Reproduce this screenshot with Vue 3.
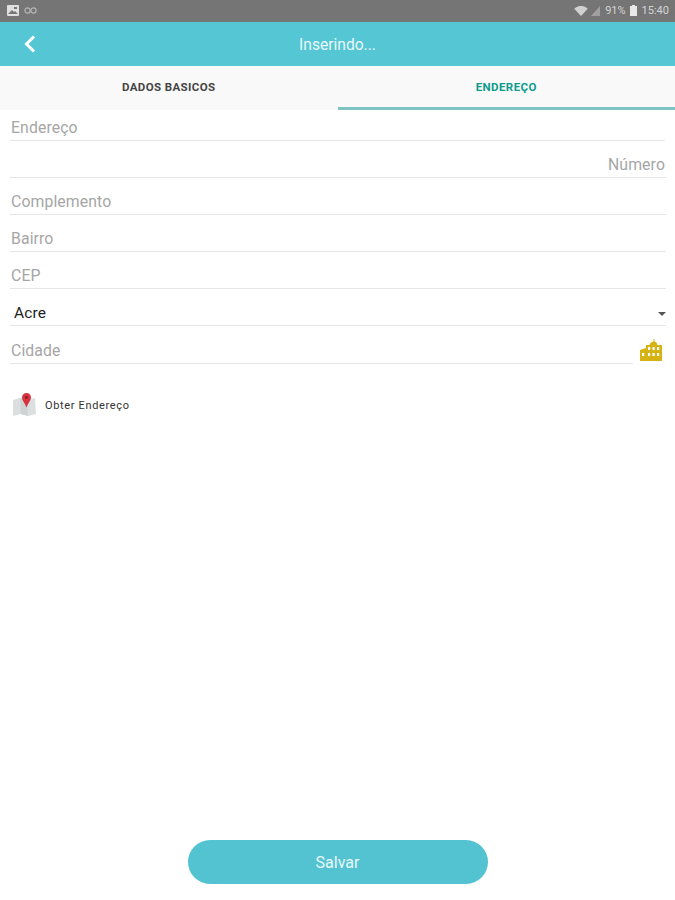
<script setup>
const fields = [
  { label: 'Endereço', cls: 'first' },
  { label: 'Número', cls: 'right' },
  { label: 'Complemento', cls: '' },
  { label: 'Bairro', cls: '' },
  { label: 'CEP', cls: '' },
]
</script>

<template>
  <div class="page">
    <div class="status">
      <div class="status-left">
        <svg width="12" height="11" viewBox="0 0 12 11"><rect width="12" height="11" rx="1" fill="#e0e0e0" /><path d="M1 9l4-4 2 2 1-1 3 3z" fill="#777" /><rect x="7" y="2" width="3" height="2" fill="#777" /></svg>
        <svg width="13" height="7" viewBox="0 0 13 7" fill="none" stroke="#b4b4b4" stroke-width="1.2"><circle cx="3.500" cy="3.500" r="2.600" /><circle cx="9.500" cy="3.500" r="2.600" /></svg>
      </div>
      <div class="status-right">
        <svg width="14" height="10" viewBox="0 0 15 11"><path d="M0 3a10.500 10.500 0 0 1 15 0L7.500 11z" fill="#d0d0d0" /></svg>
        <svg width="9" height="10" viewBox="0 0 9 10"><path d="M9 0v10H0z" fill="#a0a0a0" /></svg>
        <span class="pct">91%</span>
        <svg class="batt" width="7" height="11" viewBox="0 0 7 11"><path d="M2 0h3v1h2v10H0V1h2z" fill="#e8e8e8" /></svg>
        <span>15:40</span>
      </div>
    </div>

    <header class="bar">
      <svg class="back" width="12" height="18" viewBox="0 0 12 18" fill="none" stroke="#fff" stroke-width="3"><path d="M10 1.500L2.500 9l7.500 7.500" /></svg>
      <span>Inserindo...</span>
    </header>

    <nav class="tabs">
      <div class="tab">DADOS BASICOS</div>
      <div class="tab active">ENDEREÇO</div>
    </nav>

    <form class="form" @submit.prevent>
      <div v-for="f in fields" :key="f.label" class="field" :class="f.cls">{{ f.label }}</div>
      <div class="field select">
        <span>Acre</span>
        <i class="caret"></i>
      </div>
      <div class="city">
        <div class="field">Cidade</div>
        <svg width="22" height="22" viewBox="0 0 22 22" fill="#d5b313">
          <path d="M13.500 0h1v2.500c1.700.4 2.800 1.700 3 3.500H22v16H0V11l6-2V6h3.500c.2-1.800 1.800-3.100 4-3.500z" />
          <g fill="#fff">
            <rect x="8" y="8" width="2.200" height="3" /><rect x="12.500" y="8" width="2.200" height="3" /><rect x="17" y="8" width="2.200" height="3" />
            <rect x="2" y="14" width="2.200" height="3" /><rect x="8" y="14" width="2.200" height="3" /><rect x="12.500" y="14" width="2.200" height="3" /><rect x="17" y="14" width="2.200" height="3" />
          </g>
        </svg>
      </div>
      <div class="locate">
        <svg width="25" height="24" viewBox="0 0 25 24">
          <path d="M1 7l7-2 7 2 8-2 1 16-8 2-7-2-8 2z" fill="#dcdfe0" />
          <path d="M8 5l7 2 1 16-7-2z" fill="#cfd3d4" />
          <path d="M14.500 0a4.500 4.500 0 0 1 4.500 4.500c0 3-3 5.500-4.500 10-1.500-4.500-4.500-7-4.500-10a4.500 4.500 0 0 1 4.500-4.500z" fill="#d8343f" />
          <circle cx="14.500" cy="4.500" r="1.400" fill="#8a1c24" />
        </svg>
        <span>Obter Endereço</span>
      </div>
    </form>

    <div class="footer">
      <button class="save" type="button">Salvar</button>
    </div>
  </div>
</template>

<style>
html, body { margin: 0; background: #fff; }
</style>

<style scoped>
.page { width: 675px; height: 900px; display: flex; flex-direction: column; font-family: Roboto, "Liberation Sans", sans-serif; background: #fff; overflow: hidden; }

.status { height: 22px; box-sizing: border-box; padding: 0 6px 1px 7px; background: #757575; display: flex; align-items: center; justify-content: space-between; color: #d4d4d4; font-size: 11px; }
.status-left, .status-right { display: flex; align-items: center; gap: 5px; }
.status-right { gap: 3px; }
.pct { margin: 0 1px 0 2px; }
.batt { margin-right: 2px; }

.bar { height: 44px; padding-top: 1px; background: #55c6d4; color: #e9f8fa; font-size: 15.600px; display: flex; align-items: center; justify-content: center; position: relative; box-sizing: border-box; }
.back { position: absolute; left: 24px; top: 13px; }

.tabs { height: 44px; display: flex; background: #f9f9f9; }
.tab { flex: 1; display: flex; align-items: center; justify-content: center; box-sizing: border-box; padding-top: 1px; border-bottom: 3px solid transparent; font-size: 11.500px; font-weight: 700; color: #444; letter-spacing: 0.4px; }
.tab.active { color: #0c9c8c; border-bottom-color: #7dc4c2; }

.form { padding: 0 9px 0 10px; display: flex; flex-direction: column; }
.field { height: 37px; box-sizing: border-box; padding: 0 1px 3px; border-bottom: 1px solid #e6e6e6; display: flex; align-items: flex-end; color: #a6a6a6; font-size: 15.800px; letter-spacing: 0.1px; }
.field.first { height: 31px; margin-right: 1px; }
.field.right { justify-content: flex-end; }
.field.select { color: #222; padding: 0 0 3px 4px; justify-content: space-between; align-items: flex-end; font-size: 15.500px; }
.caret { width: 0; height: 0; margin: 0 0 6px; border: 4px solid transparent; border-top-color: #555; border-bottom: 0; }

.city { display: flex; align-items: flex-end; height: 38px; }
.city .field { flex: 1; height: 38px; margin-right: 7px; }
.city svg { margin: 0 4px 3px 0; }

.locate { display: flex; align-items: center; gap: 8px; margin: 29px 0 0 2px; color: #333; font-size: 11px; letter-spacing: 0.650px; }

.footer { flex: 1; display: flex; align-items: flex-end; justify-content: center; padding-bottom: 16px; }
.save { width: 300px; height: 44px; border: none; border-radius: 22px; background: #54c3d1; color: #e9f8fa; font-family: inherit; font-size: 16px; font-weight: 400; }
</style>
